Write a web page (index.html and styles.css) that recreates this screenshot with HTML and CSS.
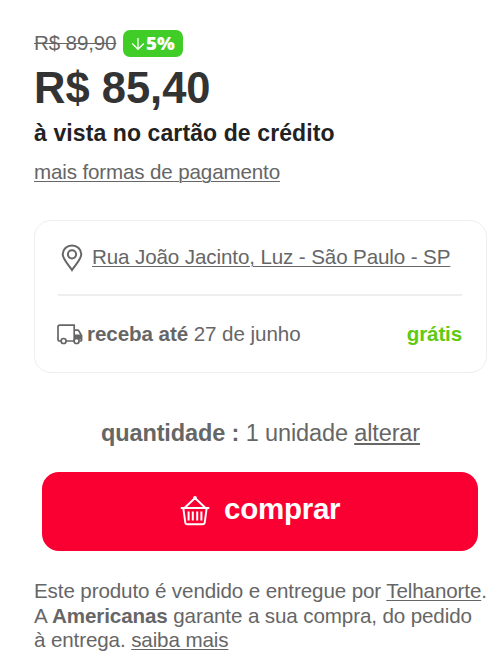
FILE: index.html
```
<!DOCTYPE html>
<html lang="pt-BR">
<head>
<meta charset="utf-8">
<title>Comprar produto</title>
<link rel="stylesheet" href="styles.css">
</head>
<body>
<main class="offer">
  <div class="old-row">
    <span class="old-price">R$ 89,90</span>
    <span class="badge">
      <svg class="arrow" viewBox="0 0 14 14"><path d="M7 1v11M1.200 6.500 7 12.300 12.800 6.500"/></svg><span class="percent">5%</span>
    </span>
  </div>
  <div class="price">R$ 85,40</div>
  <div class="condition">à vista no cartão de crédito</div>
  <a class="more">mais formas de pagamento</a>
  <section class="shipping">
    <div class="address">
      <svg class="pin" viewBox="0 0 22 28"><path d="M11 26C8 21 1.700 15.500 1.700 10.300a9.300 8.800 0 0 1 18.600 0C20.300 15.500 14 21 11 26z"/><circle cx="11" cy="10.300" r="4.100"/></svg>
      <a class="street">Rua João Jacinto, Luz - São Paulo - SP</a>
    </div>
    <div class="delivery">
      <svg class="truck" viewBox="0 0 26 21"><path d="M4.300 17H2.700Q1 17 1 15.300V3Q1 1.200 2.800 1.200H17.200V17H9M17.200 6.200h3.300q1 0 1.500 1l2.600 4.500v4.300q0 1-1 1h-1"/><path class="window" d="M17.200 10.500h6.600l.8 1.500v3.500h-7.400z"/><circle cx="6.600" cy="17" r="2.500"/><circle cx="19.600" cy="17" r="2.500"/></svg>
      <span class="date"><b>receba até</b> 27 de junho</span>
      <b class="free">grátis</b>
    </div>
  </section>
  <div class="quantity"><b>quantidade :</b> 1 unidade <a>alterar</a></div>
  <button class="buy">
    <svg class="basket" viewBox="0 0 30 30"><path d="M1.500 12H28.500M3.300 12 5.300 26.500Q5.500 28.300 7.300 28.300H22.700Q24.500 28.300 24.700 26.500L26.700 12M5 11.500 15 2 25 11.500"/><circle cx="15" cy="2" r="1"/><path class="slats" d="M8.600 15.500V24.500M12.800 15.500V24.500M17.200 15.500V24.500M21.400 15.500V24.500"/></svg>
    <span class="buy-label">comprar</span>
  </button>
  <p class="seller"><span class="line">Este produto é vendido e entregue por <a>Telhanorte</a>.</span><span class="line">A <b>Americanas</b> garante a sua compra, do pedido</span><span class="line">à entrega. <a>saiba mais</a></span></p>
</main>
</body>
</html>
```
FILE: styles.css
```
* { box-sizing: border-box; }
body {
  margin: 0;
  background: #fff;
  color: #666;
  font-family: "Liberation Sans", Arial, sans-serif;
  font-size: 20.600px;
  letter-spacing: -.15px;
  white-space: nowrap;
}
svg { display: block; flex: none; fill: none; stroke: currentColor; }
a { text-decoration: underline; text-decoration-thickness: 1px; text-underline-offset: 2px; }
.offer { width: 500px; height: 664px; padding: 30px 13px 0 34px; overflow: hidden; }
.old-row { display: flex; height: 27px; line-height: 26px; }
.old-price { width: 82px; text-decoration: line-through; text-decoration-thickness: 1px; }
.badge {
  display: flex;
  align-items: center;
  width: 60px;
  height: 27px;
  margin-left: 7px;
  padding-left: 8px;
  border-radius: 7px;
  background: #40cd28;
  color: #fff;
  font: 800 17px/27px "Open Sans", sans-serif;
  letter-spacing: 0;
}
.arrow { width: 14px; height: 14px; margin-right: 1px; stroke-width: 1.300; }
.percent { transform: scaleX(1.1); transform-origin: left; }
.price { height: 62px; color: #333; font-size: 43.500px; font-weight: bold; line-height: 63px; letter-spacing: 0; }
.condition { height: 27px; color: #222; font-size: 23px; font-weight: bold; line-height: 28px; letter-spacing: .1px; }
.more { display: block; height: 26px; margin-top: 13px; line-height: 26px; }
.shipping {
  height: 153px;
  margin-top: 35px;
  padding: 0 24px 0 23px;
  border: 1px solid #eee;
  border-radius: 17px;
}
.address { display: flex; height: 75px; padding: 23px 0 0 3px; border-bottom: 2px solid #eee; }
.pin { width: 22px; height: 28px; margin-right: 9px; stroke-width: 2; }
.street { line-height: 26px; letter-spacing: -.12px; }
.delivery { display: flex; align-items: center; height: 75px; }
.truck { width: 26px; height: 21px; margin: 2px 4px 0 -1px; stroke-width: 1.700; }
.truck .window { fill: #666; stroke: none; }
.truck circle { fill: #fff; }
.date { letter-spacing: -.08px; }
.free { margin-left: auto; color: #5fca10; }
.quantity { height: 30px; margin: 45px 0 0 67px; font-size: 23.500px; line-height: 30px; letter-spacing: -.12px; }
.quantity a { text-decoration-thickness: 2px; }
.buy {
  display: flex;
  align-items: center;
  width: 436px;
  height: 79px;
  margin: 24px 0 0 8px;
  padding: 0 0 6px 138px;
  border: 0;
  border-radius: 17px;
  background: #fa0032;
  color: #fff;
  font: bold 29.500px/34px "Liberation Sans", Arial, sans-serif;
  letter-spacing: -.25px;
}
.basket { width: 30px; height: 30px; margin: 4px 14px 0 0; stroke-width: 1.900; stroke-linecap: round; stroke-linejoin: round; }
.basket .slats { stroke-width: 2; stroke-linecap: butt; }
.seller { margin: 28px 0 0; line-height: 24.500px; letter-spacing: -.12px; }
.line { display: block; }
```
